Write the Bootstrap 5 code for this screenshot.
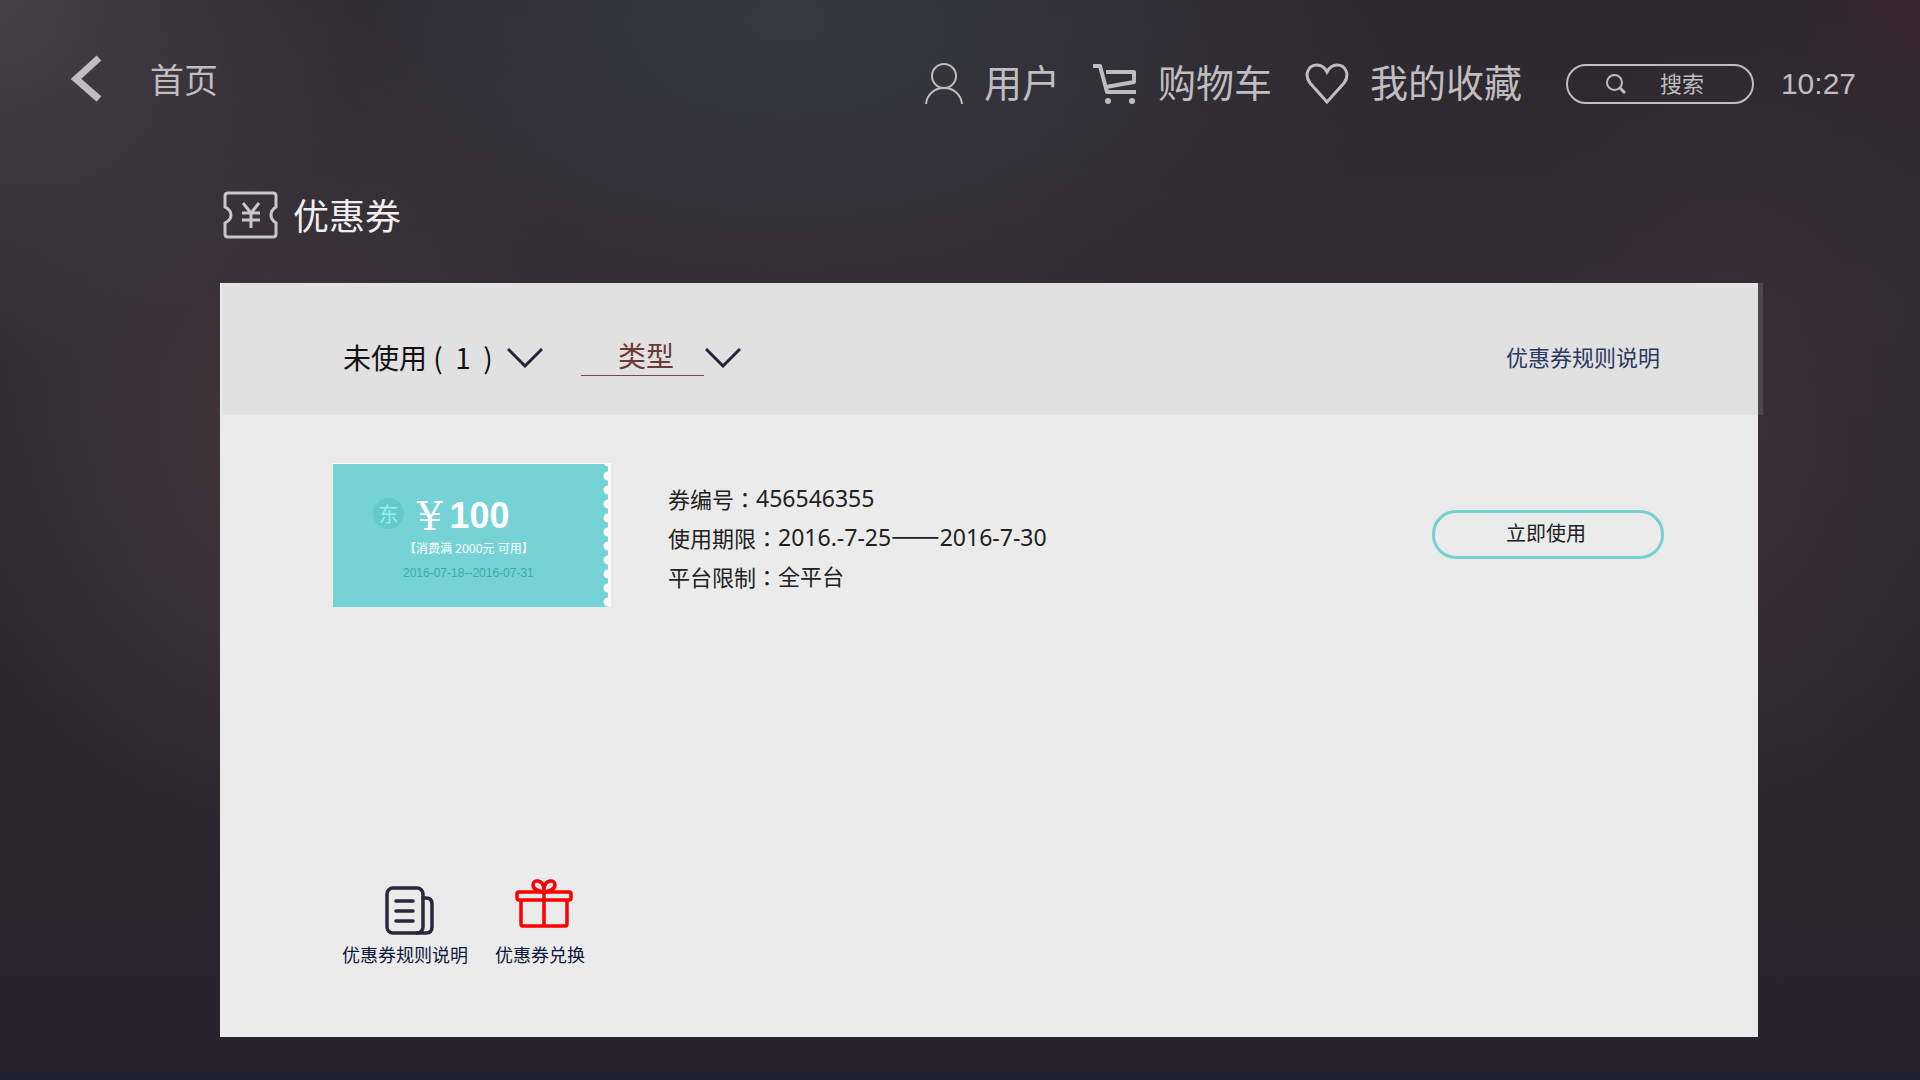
<!DOCTYPE html>
<html lang="zh-CN">
<head>
<meta charset="utf-8">
<meta name="viewport" content="width=device-width, initial-scale=1">
<title>优惠券</title>
<link rel="stylesheet" href="https://cdn.jsdelivr.net/npm/bootstrap@5.3.0/dist/css/bootstrap.min.css">
<style>
body{
  min-height:100vh;
  font-family:"Noto Sans","Noto Sans CJK SC",sans-serif;
  color:#bfbdbf;
  border-bottom:8px solid #1c222d;
  background:
    radial-gradient(circle 360px at 0 0,#464047 0,#46404700 100%),
    radial-gradient(ellipse 620px 340px at 41% 2%,#363842 0,#36384200 100%),
    radial-gradient(circle 170px at 100% 0,#38262f 0,#38262f00 100%),
    radial-gradient(ellipse 320px 440px at 14% 41%,#40363a 0,#40363a00 100%),
    radial-gradient(ellipse 240px 420px at 90% 42%,#3b2f34 0,#3b2f3400 100%),
    linear-gradient(#2d282f,#322c32 28%,#2e2930 50%,#29252d 78%,#27232d);
}
a,a:hover{color:inherit;text-decoration:none}
svg{display:block;flex:none;fill:none;stroke:currentColor}
.topbar{padding:56px 64px 0 70px;height:128px}
.home-link{font-size:34px;line-height:48px;gap:48px;height:48px}
.home-link svg{margin-bottom:2px}
.tool-link{font-size:38px;line-height:56px;height:56px;gap:21px}
.tool-link span{padding-bottom:4px}
.tools{gap:33px}
.search-pill{width:188px;height:40px;border:2px solid #bfbdbf;border-radius:20px;padding:0 38px;gap:34px;margin-left:11px}
.search-pill input{width:48px;font-size:22px;line-height:32px;color:inherit;background:none;border:0;padding:0 0 2px;outline:0}
.search-pill input::placeholder{color:#bfbdbf;opacity:1}
.clock{font:30px/56px "Liberation Sans",sans-serif;margin-left:-6px}
.page-body{padding:0 162px 35px 220px}
.page-title{font-size:36px;line-height:52px;color:#f0eff0;margin:0;font-weight:400}
.title-row{gap:15px;padding:63px 0 40px 3px}
.title-row svg{color:#c8c6c8;margin-bottom:4px}
.sheet{background:#ebebeb;color:#222;min-height:754px}
.sheet-head{height:132px;background:#e1e1e1;border-left:2px solid #ebebeb;box-shadow:5px 0 0 #4d484e;padding:16px 98px 0 121px}
.filters{gap:38px}
.filter-select{width:200px;height:44px;padding:0;border:0;border-radius:0;font-family:"Noto Sans CJK SC",sans-serif;font-size:28px;line-height:44px;color:#111;background-color:transparent;
  background-image:url("data:image/svg+xml,%3Csvg xmlns='http://www.w3.org/2000/svg' width='36' height='20' fill='none' stroke='%2325253a' stroke-width='3'%3E%3Cpath d='M1 1l17 17L35 1'/%3E%3C/svg%3E");
  background-size:36px 20px;background-position:right 13px}
.filter-type{width:160px;padding:0 0 4px 37px;line-height:40px;color:#6b3936;
  background-image:url("data:image/svg+xml,%3Csvg xmlns='http://www.w3.org/2000/svg' width='36' height='20' fill='none' stroke='%2325253a' stroke-width='3'%3E%3Cpath d='M1 1l17 17L35 1'/%3E%3C/svg%3E"),linear-gradient(#7b4a48,#7b4a48);
  background-repeat:no-repeat;background-size:36px 20px,123px 1px;background-position:right 13px,left 40px}
.rules-link,.rules-link:hover{font-size:22px;line-height:44px;color:#2b3a63}
.coupon-row{padding:48px 94px 0 113px}
.ticket{width:278px;height:144px;border-top:1px solid #fff;border-right:3px solid #fafafa;color:#fff;
  background:radial-gradient(circle 5px at 5px 5px,#fafafa 4px,#fafafa00 5px) right 7px/5px 14px repeat-y,#75d3d5;
  background-origin:padding-box;padding-top:30px}
.ticket-price{font:700 36px/44px "Liberation Sans",sans-serif;gap:5px;padding-left:40px}
.ticket-badge{width:31px;height:31px;border-radius:50%;background:#65c8ca;color:#93f3f3;font:20px/31px "Noto Sans CJK SC",sans-serif;margin:0 8px 5px 0}
.yen-sign{font:40px/44px "DejaVu Serif",serif;margin-right:2px}
.ticket-terms{font-size:12px;line-height:22px;padding-left:71px}
.ticket-dates{font:12px/26px "Liberation Sans",sans-serif;color:#42a9aa;padding-left:70px}
.facts{font-size:22px;line-height:38px;margin:0 0 0 57px;padding-top:4px}
.facts dt{font-weight:400}
.facts dd{margin:0;font-size:23px}
.facts .cjk-value{font-size:22px}
.colon{font-family:"Noto Sans CJK TC",sans-serif}
.long-dash{font-family:"Noto Sans CJK SC",sans-serif;font-size:29px;line-height:1}
.use-btn,.use-btn:hover{width:232px;height:49px;border:3px solid #75d0d2;border-radius:24px;font-size:20px;line-height:30px;padding:0 4px 0 0;color:#222;margin-bottom:2px}
.foot-links{padding:272px 0 0 122px;gap:27px}
.foot-link,.foot-link:hover{font-size:18px;line-height:28px;color:#10193a;gap:6px}
.foot-link svg{margin-left:8px}
.rules-icon{color:#29293d}
.gift-icon{color:#f00;margin-bottom:6px}
</style>
</head>
<body>
<header class="topbar d-flex justify-content-between align-items-start">
  <a href="#" class="home-link d-flex align-items-center">
    <svg width="32" height="48" viewBox="0 0 32 48" stroke-width="7"><path d="M29 3L6 24l23 20"/></svg>
    <span>首页</span>
  </a>
  <nav class="tools d-flex align-items-center" aria-label="工具">
    <a href="#" class="tool-link d-flex align-items-center">
      <svg width="38" height="42" viewBox="0 0 38 42" stroke-width="2"><circle cx="19" cy="13" r="12"/><path d="M1 41c1-10 9-16 18-16s17 6 18 16"/></svg>
      <span>用户</span>
    </a>
    <a href="#" class="tool-link d-flex align-items-center">
      <svg width="44" height="42" viewBox="0 0 44 42" stroke-width="4" stroke-linejoin="round"><path d="M0 3h7l7 26h29M13 9h28v10l-28 5"/><g fill="currentColor" stroke-width="0"><circle cx="15" cy="38" r="3"/><circle cx="39" cy="38" r="3"/></g></svg>
      <span>购物车</span>
    </a>
    <a href="#" class="tool-link d-flex align-items-center">
      <svg width="44" height="42" viewBox="0 0 44 42" stroke-width="3"><path d="M22 39L5 20C-1 12 3 2 12 2c5 0 8 3 10 7 2-4 5-7 10-7 9 0 13 10 7 18z"/></svg>
      <span>我的收藏</span>
    </a>
    <form class="search-pill d-flex align-items-center" role="search">
      <svg width="20" height="20" viewBox="0 0 20 20" stroke-width="2"><circle cx="8.500" cy="8.500" r="7.500"/><path d="M14 14l5 5" stroke-width="3"/></svg>
      <input type="text" placeholder="搜索" aria-label="搜索">
    </form>
    <time class="clock">10:27</time>
  </nav>
</header>
<main class="page-body">
  <div class="title-row d-flex align-items-center">
    <svg width="55" height="48" viewBox="0 0 55 48" stroke-width="3"><path d="M5 2h45q3 0 3 3v11q-5 3-5 8t5 8v11q0 3-3 3H5q-3 0-3-3V32q6-3 6-8t-6-8V5q0-3 3-3z"/><path d="M20 12l8 10 8-10M28 22v15M19 22h18M19 29h18"/></svg>
    <h1 class="page-title">优惠券</h1>
  </div>
  <section class="sheet">
    <div class="sheet-head d-flex justify-content-between align-items-center">
      <div class="filters d-flex align-items-center">
        <select class="form-select filter-select" aria-label="使用状态"><option>未使用&nbsp;(&nbsp;&nbsp;1&nbsp;&nbsp;)</option></select>
        <select class="form-select filter-select filter-type" aria-label="类型"><option>类型</option></select>
      </div>
      <a href="#" class="rules-link">优惠券规则说明</a>
    </div>
    <article class="coupon-row d-flex align-items-center">
      <div class="ticket">
        <div class="ticket-price d-flex align-items-center">
          <span class="ticket-badge text-center">东</span><span class="yen-sign">¥</span><span>100</span>
        </div>
        <div class="ticket-terms">【消费满 2000元 可用】</div>
        <div class="ticket-dates">2016-07-18--2016-07-31</div>
      </div>
      <dl class="facts">
        <div class="d-flex"><dt>券编号<span class="colon" lang="zh-TW">：</span></dt><dd>456546355</dd></div>
        <div class="d-flex"><dt>使用期限<span class="colon" lang="zh-TW">：</span></dt><dd>2016.-7-25<span class="long-dash">——</span>2016-7-30</dd></div>
        <div class="d-flex"><dt>平台限制<span class="colon" lang="zh-TW">：</span></dt><dd class="cjk-value">全平台</dd></div>
      </dl>
      <button type="button" class="btn use-btn ms-auto">立即使用</button>
    </article>
    <div class="foot-links d-flex align-items-end">
      <a href="#" class="foot-link d-flex flex-column align-items-center">
        <svg class="rules-icon" width="49" height="49" viewBox="0 0 49 49" stroke-width="3.500" stroke-linecap="round"><rect x="2" y="2" width="36" height="45" rx="6"/><path d="M38 12h3q6 0 6 6v23q0 6-6 6h-9M11 15h17M11 25h17M11 35h17"/></svg>
        <span>优惠券规则说明</span>
      </a>
      <a href="#" class="foot-link d-flex flex-column align-items-center">
        <svg class="gift-icon" width="58" height="50" viewBox="0 0 58 50" stroke-width="3.500" stroke-linejoin="round"><rect x="2" y="13" width="54" height="8" rx="2"/><path d="M6 21v24q0 2 2 2h42q2 0 2-2V21M29 13v34M29 13c-5-1-11-2-11-7 0-6 10-6 11 4 1-10 11-10 11-4 0 5-6 6-11 7z"/></svg>
        <span>优惠券兑换</span>
      </a>
    </div>
  </section>
</main>
<script src="https://cdn.jsdelivr.net/npm/bootstrap@5.3.0/dist/js/bootstrap.bundle.min.js"></script>
</body>
</html>
